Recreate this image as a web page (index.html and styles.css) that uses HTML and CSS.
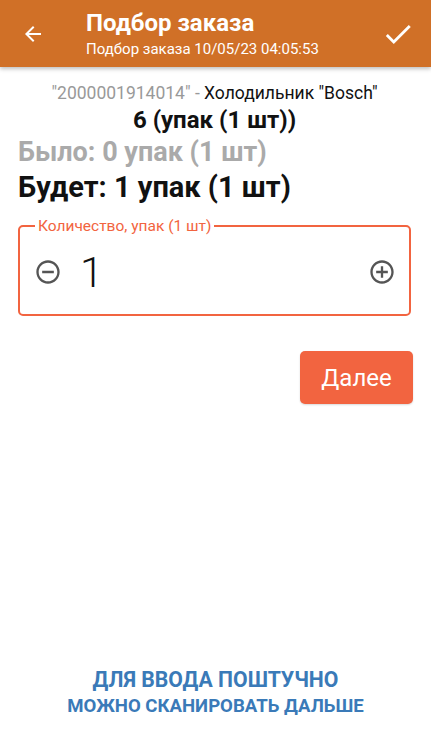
FILE: index.html
```html
<!DOCTYPE html>
<html lang="ru">
<head>
    <meta charset="UTF-8">
    <meta name="viewport" content="width=device-width, initial-scale=1.0">
    <title>Подбор заказа</title>
    <link rel="stylesheet" href="styles.css">
</head>
<body>

<div class="app">
    <div class="toolbar">
        <button class="tb-icon back">
            <svg width="24" height="24" viewBox="0 0 24 24"><path d="M20 11H7.83l5.59-5.59L12 4l-8 8 8 8 1.41-1.41L7.83 13H20v-2z" fill="#fff"/></svg>
        </button>
        <div class="tb-titles">
            <div class="tb-title">Подбор заказа</div>
            <div class="tb-sub">Подбор заказа 10/05/23 04:05:53</div>
        </div>
        <button class="tb-icon done">
            <svg width="34" height="34" viewBox="0 0 24 24"><path d="M9 16.17L4.83 12l-1.42 1.41L9 19 21 7l-1.41-1.41z" fill="#fff"/></svg>
        </button>
    </div>

    <div class="content">
        <p class="item"><span class="code">"2000001914014" -</span> Холодильник "Bosch"</p>
        <p class="total">6 (упак (1 шт))</p>
        <p class="was">Было: 0 упак (1 шт)</p>
        <p class="will">Будет: 1 упак (1 шт)</p>

        <fieldset class="qty">
            <legend>Количество, упак (1 шт)</legend>
            <div class="qty-row">
                <svg class="qty-btn" width="28" height="28" viewBox="0 0 24 24"><path d="M7 11v2h10v-2H7zm5-9C6.48 2 2 6.48 2 12s4.48 10 10 10 10-4.48 10-10S17.52 2 12 2zm0 18c-4.41 0-8-3.59-8-8s3.59-8 8-8 8 3.59 8 8-3.59 8-8 8z" fill="#555"/></svg>
                <span class="qty-value">1</span>
                <svg class="qty-btn" width="28" height="28" viewBox="0 0 24 24"><path d="M13 7h-2v4H7v2h4v4h2v-4h4v-2h-4V7zm-1-5C6.48 2 2 6.48 2 12s4.48 10 10 10 10-4.48 10-10S17.52 2 12 2zm0 18c-4.41 0-8-3.59-8-8s3.59-8 8-8 8 3.59 8 8-3.59 8-8 8z" fill="#555"/></svg>
            </div>
        </fieldset>

        <div class="actions">
            <button class="next-button">Далее</button>
        </div>
    </div>

    <div class="hint">
        <div class="hint-top">ДЛЯ ВВОДА ПОШТУЧНО</div>
        <div class="hint-bottom">МОЖНО СКАНИРОВАТЬ ДАЛЬШЕ</div>
    </div>
</div>

</body>
</html>
```

FILE: styles.css
```css
body {
    margin: 0;
    font-family: Roboto, "Noto Sans", sans-serif;
    background-color: #fff;
}
.app {
    width: 431px;
    height: 739px;
    display: flex;
    flex-direction: column;
}
.toolbar {
    height: 67px;
    flex-shrink: 0;
    background-color: #d07027;
    display: flex;
    align-items: center;
    box-shadow: 0 2px 4px rgba(0, 0, 0, 0.25);
    color: #fff;
}
.tb-icon {
    background: none;
    border: none;
    padding: 0;
    display: flex;
    align-items: center;
    justify-content: center;
}
.back {
    width: 32px;
    margin-left: 17px;
}
.tb-titles {
    flex: 1;
    margin-left: 37px;
    padding-top: 1px;
}
.tb-title {
    font-size: 24px;
    font-weight: 700;
    line-height: 29px;
}
.tb-sub {
    font-size: 15px;
    line-height: 20px;
    margin-top: 1px;
}
.done {
    width: 40px;
    margin-right: 13px;
}
.content {
    padding: 0 20px 0 18px;
    flex: 1;
}
p {
    margin: 0;
}
.item {
    text-align: center;
    font-size: 17.5px;
    margin-top: 14px;
    line-height: 24px;
    color: #111;
}
.code {
    color: #999;
}
.total {
    text-align: center;
    font-size: 24px;
    font-weight: 700;
    line-height: 30px;
    color: #111;
}
.was {
    font-size: 27px;
    font-weight: 700;
    color: #aaa;
    line-height: 33px;
    margin-top: 1px;
}
.will {
    font-size: 29px;
    font-weight: 700;
    color: #111;
    line-height: 36px;
}
.qty {
    margin: 13px 0 0 0;
    border: 2px solid #f26440;
    border-radius: 5px;
    padding: 0 13px 0 14px;
    height: 98px;
    box-sizing: border-box;
}
.qty legend {
    color: #f26440;
    font-size: 15.5px;
    padding: 0 3px;
    margin-left: 1px;
    line-height: 16px;
}
.qty-row {
    display: flex;
    align-items: center;
    height: 76px;
}
.qty-value {
    flex: 1;
    font-size: 42px;
    font-weight: 300;
    color: #111;
    margin-left: 18px;
}
.actions {
    display: flex;
    justify-content: flex-end;
    margin-top: 35px;
    margin-right: -2px;
}
.next-button {
    background-color: #f26440;
    color: #fff;
    border: none;
    border-radius: 5px;
    font-family: Roboto, sans-serif;
    font-size: 24px;
    width: 113px;
    height: 53px;
    box-shadow: 0 1px 2px rgba(0, 0, 0, 0.15);
}
.hint {
    text-align: center;
    color: #3a7ab8;
    font-weight: 700;
    line-height: 26px;
    padding-bottom: 20px;
}
.hint-top {
    font-size: 21.2px;
}
.hint-bottom {
    font-size: 18.6px;
}
```
